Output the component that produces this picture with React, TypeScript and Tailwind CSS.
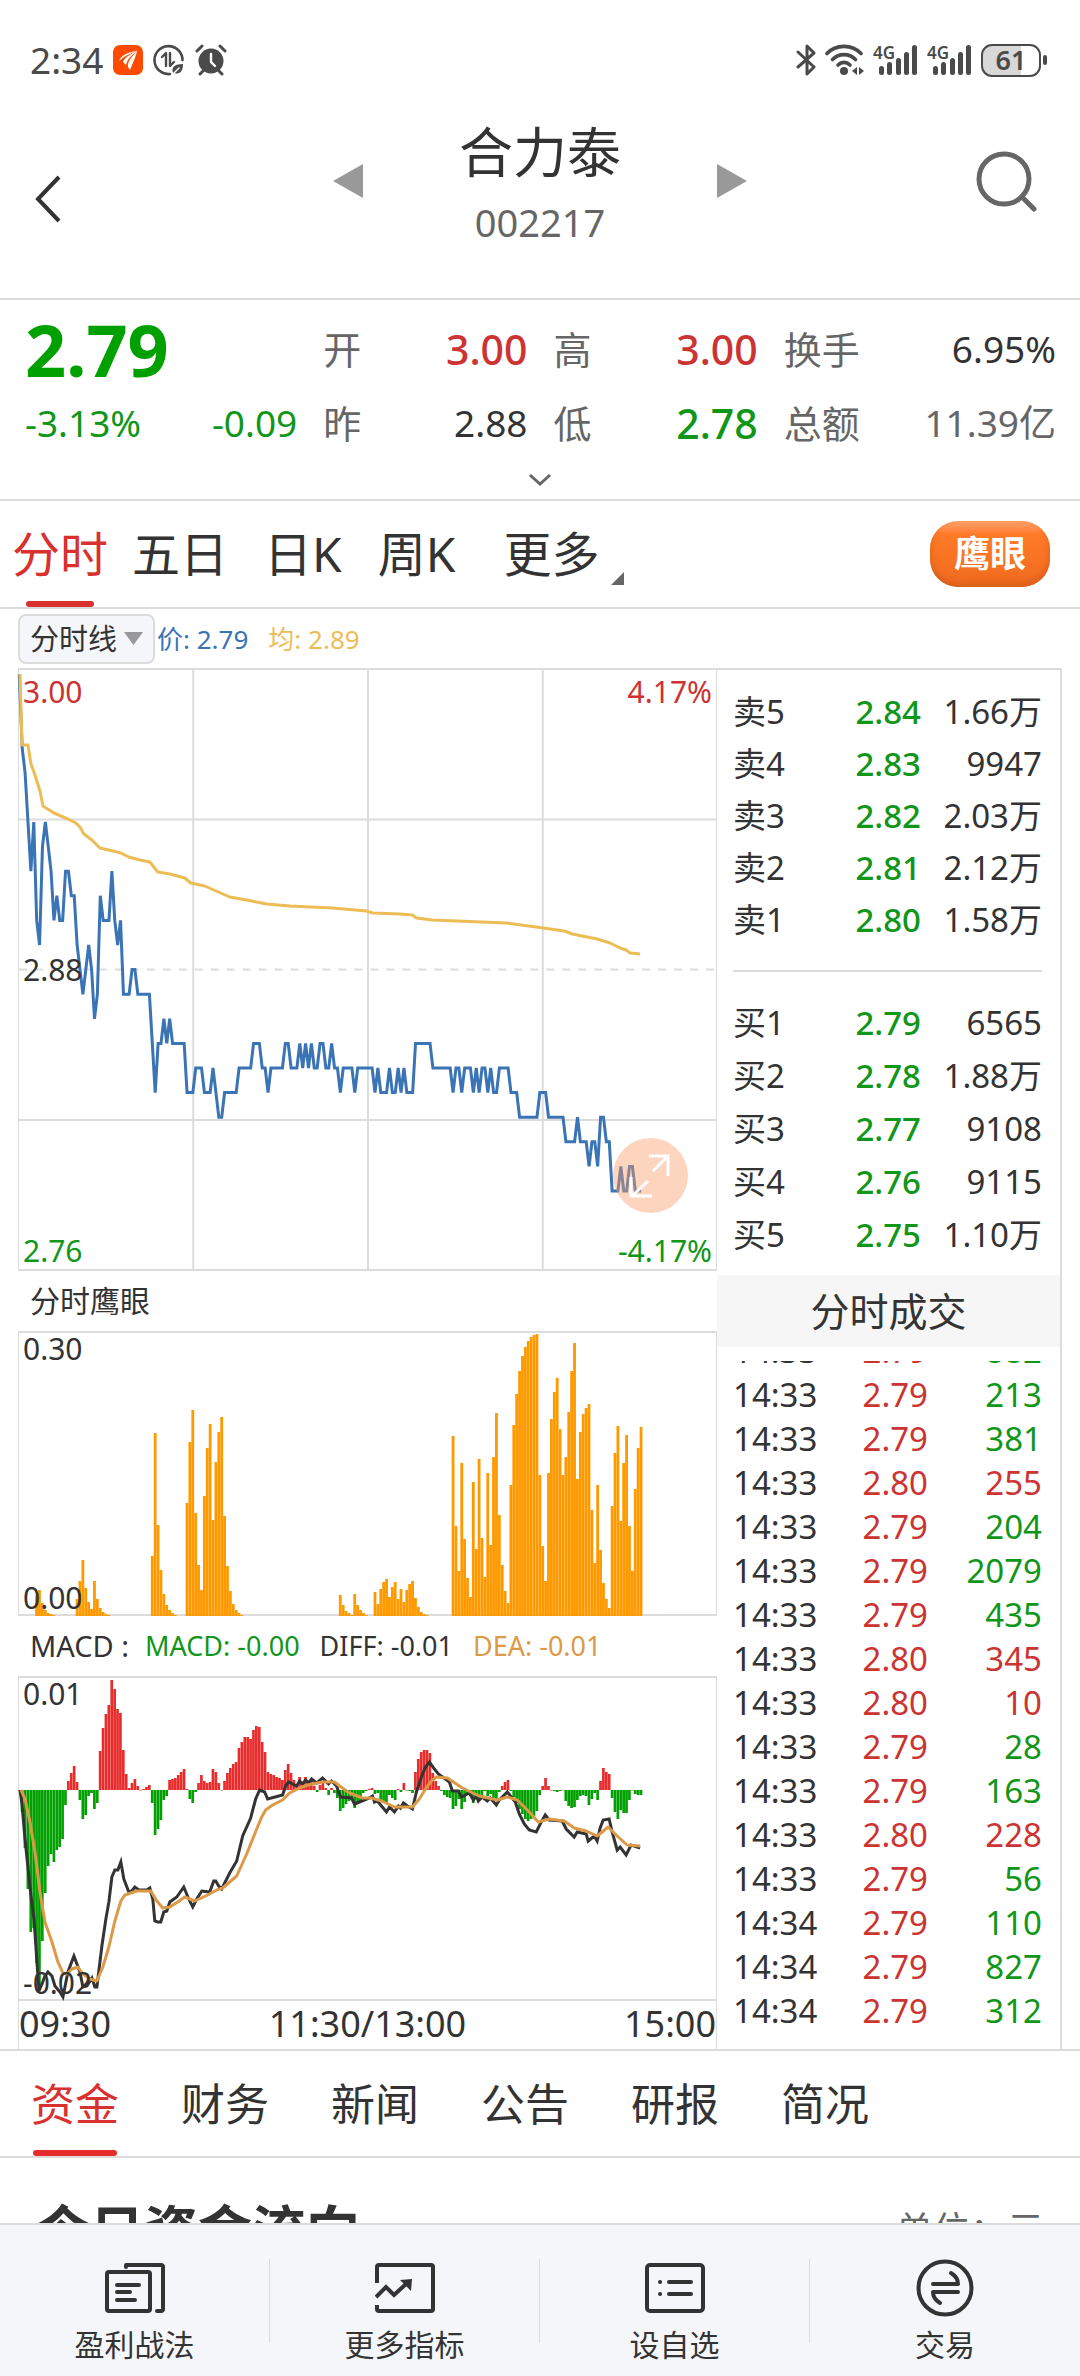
import { useState } from "react";

const SLOTS = 241;
const CHART_W = 698;
const STEP = CHART_W / SLOTS;

// [price in fen, number of minutes it stays there]
const PRICE_RUNS = [
  [300, 1], [297, 1], [296, 1], [294, 1], [292, 1], [294, 1], [290, 1], [289, 1], [293, 1], [294, 1],
  [293, 1], [292, 1], [290, 1], [291, 1], [290, 2], [292, 2], [291, 2], [289, 1], [288, 1], [287, 1],
  [288, 1], [289, 1], [288, 1], [286, 1], [287, 1], [291, 1], [290, 3], [292, 1], [290, 1], [289, 1],
  [290, 1], [287, 3], [288, 2], [287, 5], [285, 1], [283, 1], [285, 2], [286, 1], [285, 1], [286, 1],
  [285, 5], [283, 3], [284, 3], [283, 3], [284, 1], [283, 1], [282, 2], [283, 5], [284, 5], [285, 3],
  [284, 2], [283, 1], [284, 5], [285, 2], [284, 3], [285, 1], [284, 1], [285, 1], [284, 1], [285, 1],
  [284, 2], [285, 2], [284, 2], [285, 1], [284, 2], [283, 1], [284, 4], [283, 1], [284, 6], [283, 1],
  [284, 1], [283, 3], [284, 1], [283, 2], [284, 1], [283, 1], [284, 1], [283, 3], [285, 6], [284, 7],
  [283, 1], [284, 2], [283, 1], [284, 3], [283, 1], [284, 1], [283, 1], [284, 2], [283, 1], [284, 1],
  [283, 2], [284, 4], [283, 3], [282, 7], [283, 3], [282, 6], [281, 4], [282, 1], [281, 3], [280, 1],
  [281, 2], [280, 1], [282, 2], [281, 2], [279, 3], [280, 1], [279, 2], [280, 2], [279, 3],
];

const AVERAGE_LINE =
  "1,5 3,76 9,76 12,95 15,103 21,122 24,137 35,144 49,150 57,154 61,158 65,165 73,171 81,179 90,181 102,184 110,188 121,191 131,193 139,203 151,205 166,209 172,214 186,217 211,228 228,231 248,235 271,237 314,239 348,242 354,244 381,245 394,246 398,249 414,251 488,254 518,258 546,262 554,265 579,270 592,274 602,279 608,281 612,284 622,285";

// groups of bars: first minute, then one height per minute
const EAGLE_GROUPS: [number, number[]][] = [
  [6, [20, 26, 13, 6, 3, 2, 1]],
  [20, [17, 35, 56, 28, 14, 7, 35, 17, 8, 4, 2, 1]],
  [46, [60, 183, 91, 46, 22, 11, 6, 3, 1]],
  [58, [113, 174, 206, 103, 51, 26, 120, 168, 192, 96, 154, 184, 199, 100, 50, 25, 12, 6, 3, 1]],
  [111, [21, 11, 5, 3, 1, 22, 11, 6, 3, 1]],
  [123, [24, 12, 27, 34, 37, 19, 29, 34, 17, 27, 14, 26, 32, 35, 18, 9, 4, 2, 1]],
  [150, [180, 90, 45, 153, 77, 38, 19, 134, 67, 157, 78, 39, 143, 71, 159, 203, 101, 51, 25, 13, 131, 191, 222, 245, 260, 269, 275, 279, 281, 282, 141, 70, 35, 143, 197, 224, 238, 187, 141, 159, 204, 245, 273, 137, 184, 202, 208, 212, 106, 53, 131, 66, 33, 17, 8, 110, 163, 190, 95, 153, 181, 90, 45, 127, 168, 189]],
];

const MACD_BARS = [
  0, -22, -58, -99, -142, -138, -173, -199, -151, -103, -76, -64, -72, -60, -57, -49, -15, 9, 17, 24,
  8, -10, -29, -25, -6, -3, -19, -13, 39, 62, 76, 85, 110, 101, 81, 77, 40, 16, 2, 7,
  11, 4, 0, 1, 3, 5, -13, -45, -39, -30, -10, -6, 10, 11, 12, 15, 18, 21, 1, -9,
  -13, -2, 7, 15, 9, 7, 8, 21, 18, 7, 0, 9, 17, 22, 26, 28, 42, 48, 53, 53,
  51, 60, 64, 63, 48, 38, 18, 16, 15, 13, 12, 10, 20, 26, 17, 10, 4, 13, 7, 13,
  9, 11, 4, -2, 5, 8, 2, -5, 2, -3, -8, -21, -18, -14, -11, -10, -18, -14, -12, -3,
  -1, 1, 2, -4, -3, -10, -13, -14, -5, -8, -10, 1, -2, 7, 0, -1, -3, 18, 31, 38,
  40, 40, 37, 17, 9, 4, -1, -5, -7, -8, -19, -16, -9, -19, -12, -5, -6, -13, -6, -9,
  -6, -1, -6, -4, -8, -9, -2, 4, 8, 10, -1, -7, -13, -19, -24, -29, -31, -29, -26, -21,
  -5, 4, 12, 4, 0, -1, -2, -1, 0, -11, -16, -18, -17, -10, -6, -5, -6, -15, -9, -3,
  -10, 9, 22, 18, 16, -8, -22, -29, -20, -23, -23, -10, 0, -4, -5, -5,
];

const DIFF_LINE =
  "1,113 3,127 6,162 12,219 15,242 20,314 23,307 26,299 29,295 33,299 36,309 41,315 44,320 49,295 55,279 61,295 64,310 68,309 73,301 76,310 78,310 83,269 87,242 90,225 93,200 96,193 99,193 102,185 105,202 110,215 113,214 116,210 120,213 128,213 131,211 134,222 136,244 139,245 142,245 145,235 148,234 151,225 158,220 165,210 170,222 174,230 178,222 183,214 191,215 195,204 197,204 200,209 203,212 211,196 218,184 224,159 232,141 237,122 241,113 246,115 249,122 264,118 267,109 270,105 278,109 281,104 284,107 287,103 290,106 293,102 298,106 304,101 310,107 313,104 318,109 322,120 333,121 336,127 341,125 351,121 354,119 356,125 359,124 363,129 368,135 371,130 376,135 380,129 382,131 385,126 389,129 394,132 398,115 403,100 407,90 411,85 416,92 420,97 431,105 434,114 440,114 443,120 451,116 455,123 458,119 460,124 464,120 469,124 472,121 478,128 481,123 489,115 497,125 501,137 506,147 511,153 518,155 523,145 527,138 531,143 544,144 548,152 556,160 559,155 568,157 570,164 576,159 579,164 582,151 585,143 591,142 594,155 599,173 602,170 608,178 613,168 622,171";

const DEA_LINE =
  "2,113 6,122 11,145 16,175 21,215 26,245 33,265 39,285 44,296 48,297 53,292 59,290 64,297 71,302 78,304 84,290 90,270 96,244 102,224 106,218 118,214 132,214 138,224 144,231 151,230 159,225 166,220 176,224 189,218 198,213 204,211 218,199 228,177 236,157 243,140 247,133 254,128 264,123 271,116 281,111 289,108 304,105 316,105 321,109 331,116 344,121 353,121 363,124 376,130 394,130 401,122 407,112 413,104 418,100 429,101 444,111 461,119 479,123 489,120 499,123 511,135 520,145 531,142 546,144 556,151 568,154 579,159 590,150 599,159 609,168 622,169";

const SELLS = [
  ["卖5", "2.84", "1.66万"],
  ["卖4", "2.83", "9947"],
  ["卖3", "2.82", "2.03万"],
  ["卖2", "2.81", "2.12万"],
  ["卖1", "2.80", "1.58万"],
];

const BUYS = [
  ["买1", "2.79", "6565"],
  ["买2", "2.78", "1.88万"],
  ["买3", "2.77", "9108"],
  ["买4", "2.76", "9115"],
  ["买5", "2.75", "1.10万"],
];

const TICKS: [string, string, number, boolean][] = [
  ["14:33", "2.79", 882, false],
  ["14:33", "2.79", 213, false],
  ["14:33", "2.79", 381, false],
  ["14:33", "2.80", 255, true],
  ["14:33", "2.79", 204, false],
  ["14:33", "2.79", 2079, false],
  ["14:33", "2.79", 435, false],
  ["14:33", "2.80", 345, true],
  ["14:33", "2.80", 10, true],
  ["14:33", "2.79", 28, false],
  ["14:33", "2.79", 163, false],
  ["14:33", "2.80", 228, true],
  ["14:33", "2.79", 56, false],
  ["14:34", "2.79", 110, false],
  ["14:34", "2.79", 827, false],
  ["14:34", "2.79", 312, false],
];

const PERIODS = [
  { name: "分时", space: "" },
  { name: "五日", space: "ml-6" },
  { name: "日K", space: "ml-9" },
  { name: "周K", space: "ml-9" },
  { name: "更多", space: "ml-12" },
];

const SECTIONS = ["资金", "财务", "新闻", "公告", "研报", "简况"];

function slotX(i: number) {
  return (i + 0.1) * STEP;
}

function pricePoints() {
  const points: string[] = [];
  let i = 0;
  PRICE_RUNS.forEach(([price, count]) => {
    for (let n = 0; n < count; n++) {
      points.push(`${slotX(i).toFixed(1)},${(300.6 - (price - 288) * 24.6).toFixed(1)}`);
      i++;
    }
  });
  return points.join(" ");
}

function Signal() {
  return (
    <svg className="overflow-visible" width="46" height="32" viewBox="0 0 46 32" fill="#4a4a4a">
      <text x="0" y="15" fontSize="17" fontWeight="600">4G</text>
      <rect x="6" y="22" width="5" height="9" rx="2.5" />
      <rect x="14" y="18" width="5" height="13" rx="2.5" />
      <rect x="23" y="14" width="5" height="17" rx="2.5" />
      <rect x="31" y="8" width="5" height="23" rx="2.5" />
      <rect x="39" y="1" width="5" height="30" rx="2.5" />
    </svg>
  );
}

function StatusBar() {
  return (
    <div className="flex items-center justify-between h-[100px] pt-5 pl-[30px] pr-[33px] text-[#4a4a4a]">
      <div className="flex items-center gap-[10px]">
        <span className="text-[37px] leading-[40px]">2:34</span>
        <svg width="30" height="30" viewBox="0 0 30 30">
          <rect width="30" height="30" rx="7" fill="#ff4a00" />
          <path d="M6 16C8 10 14 8 24 5.500C18 9 12 10 6 16z" fill="#fff" />
          <path d="M10 17C12 12 17 10 24 5.500C20 10 15 12 13 20z" fill="#fff" />
          <path d="M15 22C14 16 20 11 24 5.500C23 12 20 17 17 25z" fill="#fff" />
        </svg>
        <svg width="32" height="32" viewBox="0 0 32 32" fill="none" stroke="#4a4a4a" strokeWidth="2.6" strokeLinecap="round" strokeLinejoin="round">
          <path d="M17 30A14 14 0 1 1 29.500 16" />
          <path d="M9 13l4-4v13M17 9v13l4-4" strokeWidth="2.4" />
          <path d="M20 29c-2-6 2-9 10-9 0 7-3 11-9 9z" fill="#4a4a4a" stroke="none" />
          <path d="M19 31l7-7" stroke="#fff" strokeWidth="1.500" />
        </svg>
        <svg width="32" height="32" viewBox="0 0 32 32" fill="none" stroke="#4a4a4a" strokeWidth="3" strokeLinecap="round">
          <circle cx="16" cy="17" r="12.500" fill="#4a4a4a" stroke="none" />
          <path d="M2 7l5-5M30 7l-5-5M5 30l4-4M27 30l-4-4" />
          <path d="M16 10v8l4 4" stroke="#fff" strokeWidth="2.4" />
        </svg>
      </div>
      <div className="flex items-center gap-2">
        <svg width="21" height="32" viewBox="0 0 21 32" fill="none" stroke="#4a4a4a" strokeWidth="3" strokeLinecap="round" strokeLinejoin="round">
          <path d="M2 8l16 15-7 7V2l7 7L2 23" />
        </svg>
        <svg width="40" height="32" viewBox="0 0 40 32" fill="none" stroke="#4a4a4a" strokeWidth="3.600" strokeLinecap="round">
          <path d="M2 9.500C11 0 27 0 36 9.500" />
          <path d="M7.500 15.500C14 9 24 9 30.500 15.500" />
          <path d="M13 21C16.500 17.500 21.500 17.500 25 21" />
          <circle cx="19" cy="27" r="4" fill="#4a4a4a" stroke="none" />
          <path d="M32 23v8l-5-4zM34 23v8l5-4z" fill="#4a4a4a" stroke="none" />
        </svg>
        <Signal />
        <Signal />
        <div className="flex items-center gap-[2px]">
          <div className="flex items-center justify-center w-[60px] h-[33px] rounded-[11px] border-2 border-[#4a4a4a] bg-linear-to-r from-[#d8d8d8] from-68% to-white to-68%">
            <span className="text-[27px] leading-[28px] font-semibold">61</span>
          </div>
          <span className="w-1 h-[10px] rounded-full bg-[#4a4a4a]" />
        </div>
      </div>
    </div>
  );
}

function Header() {
  return (
    <header className="flex items-center justify-between h-[200px] px-8 pb-6 border-b-2 border-[#dcdcdc]">
      <button aria-label="返回" className="flex w-20 pt-6">
        <svg width="32" height="48" viewBox="0 0 32 48" fill="none" stroke="#333" strokeWidth="4">
          <path d="M27 2L6 24l21 22" />
        </svg>
      </button>
      <div className="flex items-center justify-between w-[414px]">
        <button aria-label="上一只" className="pb-3">
          <svg width="30" height="34" viewBox="0 0 30 34" fill="#999">
            <path d="M30 0v34L0 17z" />
          </svg>
        </button>
        <div className="text-center">
          <h1 className="text-[54px] leading-[70px] text-[#333]">合力泰</h1>
          <p className="text-[38px] leading-[70px] text-[#666]">002217</p>
        </div>
        <button aria-label="下一只" className="pb-3">
          <svg width="30" height="34" viewBox="0 0 30 34" fill="#999">
            <path d="M0 0v34l30-17z" />
          </svg>
        </button>
      </div>
      <button aria-label="搜索" className="flex justify-end w-20 pr-[10px] pb-3">
        <svg width="62" height="62" viewBox="0 0 62 62" fill="none" stroke="#666" strokeWidth="5" strokeLinecap="round">
          <circle cx="28" cy="29" r="25" />
          <path d="M46 47l12 12" />
        </svg>
      </button>
    </header>
  );
}

function Quote({ label, value, valueClass }: { label: string; value: string; valueClass: string }) {
  return (
    <div className="flex items-center justify-between h-[74px]">
      <span className="text-[38px] leading-[48px] text-[#666]">{label}</span>
      <span className={valueClass}>{value}</span>
    </div>
  );
}

function QuotePanel() {
  return (
    <section className="border-b-2 border-[#dcdcdc] pt-3">
      <div className="grid grid-cols-[4fr_3fr_3fr_4fr] gap-x-[26px] pl-[25px] pr-6">
        <div className="flex items-center h-[74px] text-[72px] leading-[74px] font-bold text-[#00a000]">2.79</div>
        <Quote label="开" value="3.00" valueClass="text-[41px] leading-[48px] font-medium text-[#cc3333]" />
        <Quote label="高" value="3.00" valueClass="text-[41px] leading-[48px] font-medium text-[#cc3333]" />
        <Quote label="换手" value="6.95%" valueClass="text-[37px] leading-[48px] text-[#333]" />
        <div className="flex items-center justify-between h-[74px] text-[37px] leading-[48px] text-[#109618]">
          <span>-3.13%</span>
          <span>-0.09</span>
        </div>
        <Quote label="昨" value="2.88" valueClass="text-[37px] leading-[48px] text-[#333]" />
        <Quote label="低" value="2.78" valueClass="text-[41px] leading-[48px] font-medium text-[#109618]" />
        <Quote label="总额" value="11.39亿" valueClass="text-[37px] leading-[48px] text-[#666]" />
      </div>
      <button aria-label="展开" className="flex justify-center items-center w-full h-[39px]">
        <svg width="24" height="14" viewBox="0 0 24 14" fill="none" stroke="#666" strokeWidth="3">
          <path d="M2 2l10 9 10-9" />
        </svg>
      </button>
    </section>
  );
}

function PeriodTabs() {
  const [active, setActive] = useState("分时");
  return (
    <nav className="flex items-center justify-between h-[108px] pl-3 pr-[30px] border-b-2 border-[#dcdcdc]">
      <div className="flex h-full">
        {PERIODS.map(({ name, space }) => (
          <button
            key={name}
            onClick={() => setActive(name)}
            className={`relative h-full text-[48px] leading-[60px] ${space} ${active === name ? "text-[#d93030]" : "text-[#333]"}`}
          >
            {name}
            {active === name && <span className="absolute bottom-0 inset-x-[14px] h-[6px] rounded-full bg-[#d93030]" />}
          </button>
        ))}
        <svg className="self-end mb-[22px] ml-3" width="13" height="13" viewBox="0 0 13 13" fill="#666">
          <path d="M13 0v13H0z" />
        </svg>
      </div>
      <button className="w-[120px] h-[66px] rounded-[28px] bg-linear-to-b from-[#ffa36a] via-[#ff7a28] via-20% to-[#f06a1e] text-[36px] leading-[60px] font-bold text-white shadow-[inset_0_-4px_6px_#d8601c]">
        鹰眼
      </button>
    </nav>
  );
}

function PriceChart() {
  return (
    <div className="relative border-y-2 border-x border-[#dcdcdc] text-[30px] leading-[36px]">
      <svg className="block w-full h-[599px] overflow-visible" viewBox="0 1 698 599" preserveAspectRatio="none" fill="none">
        <path d="M0 150.500H698M0 451H698M174.500 0V601M349.500 0V601M524.500 0V601" stroke="#dcdcdc" strokeWidth="2" />
        <path d="M0 300.500H698" stroke="#dcdcdc" strokeWidth="2" strokeDasharray="8 8" />
        <polyline points={pricePoints()} stroke="#3a74b5" strokeWidth="3" />
        <polyline points={AVERAGE_LINE} stroke="#ecbc55" strokeWidth="3" strokeLinejoin="round" />
      </svg>
      <span className="absolute left-1 top-1 text-[#cc3333]">3.00</span>
      <span className="absolute right-1 top-1 text-[#cc3333]">4.17%</span>
      <span className="absolute left-1 top-1/2 -translate-y-1/2 text-[#333]">2.88</span>
      <span className="absolute left-1 bottom-0 text-[#109618]">2.76</span>
      <span className="absolute right-1 bottom-0 text-[#109618]">-4.17%</span>
      <button aria-label="全屏" className="absolute right-7 bottom-14 w-[75px] h-[75px] rounded-full bg-[#fa9c63]/42">
        <svg width="75" height="75" viewBox="0 0 75 75" fill="none" stroke="#fff" strokeWidth="3">
          <path d="M36 18h19v20M55 18L40 33M35 43L19 58M18 39v19h21" />
        </svg>
      </button>
    </div>
  );
}

function EagleChart() {
  return (
    <div className="relative border-y-2 border-x border-[#dcdcdc] text-[30px] leading-[32px] text-[#333]">
      <svg className="block w-full h-[281px] overflow-visible" viewBox="0 0 698 281" preserveAspectRatio="none" fill="#ff9900">
        {EAGLE_GROUPS.map(([start, heights]) =>
          heights.map((h, n) => (
            <rect key={start + n} x={slotX(start + n) - STEP / 2} y={283 - h} width="2.8" height={h} />
          ))
        )}
      </svg>
      <span className="absolute left-1 top-0">0.30</span>
      <span className="absolute left-1 bottom-0">0.00</span>
    </div>
  );
}

function MacdChart() {
  return (
    <div className="relative border-y-2 border-x border-[#dcdcdc] text-[30px] leading-[32px] text-[#333]">
      <svg className="block w-full h-[321px] overflow-visible" viewBox="0 1 698 321" preserveAspectRatio="none" fill="none">
        {MACD_BARS.map((v, i) => (
          <rect
            key={i}
            x={slotX(i) - STEP / 2}
            y={v > 0 ? 113 - v : 113}
            width="2.700"
            height={Math.max(Math.abs(v), 0.5)}
            fill={v >= 0 ? "#e82c2c" : "#00a000"}
          />
        ))}
        <polyline points={DIFF_LINE} stroke="#333" strokeWidth="3" />
        <polyline points={DEA_LINE} stroke="#dc9a48" strokeWidth="3" strokeLinejoin="round" />
      </svg>
      <span className="absolute left-1 top-0">0.01</span>
      <span className="absolute left-1 bottom-0">-0.02</span>
    </div>
  );
}

function Charts() {
  return (
    <div className="flex-1 min-w-0">
      <PriceChart />
      <h2 className="h-[60px] pl-3 text-[30px] leading-[60px] text-[#333]">分时鹰眼</h2>
      <EagleChart />
      <div className="flex items-center h-[60px] pl-3 text-[27px] leading-[60px] whitespace-nowrap">
        <span className="text-[29px] text-[#333]">MACD :</span>
        <span className="ml-4 text-[#109618]">MACD: -0.00</span>
        <span className="ml-5 text-[#333]">DIFF: -0.01</span>
        <span className="ml-5 text-[#dc9a48]">DEA: -0.01</span>
      </div>
      <MacdChart />
      <div className="flex justify-between h-12 border-x border-[#dcdcdc] text-[36px] leading-[46px] text-[#333]">
        <span>09:30</span>
        <span>11:30/13:00</span>
        <span>15:00</span>
      </div>
    </div>
  );
}

function Orders({ rows, rowClass }: { rows: string[][]; rowClass: string }) {
  return (
    <table className="w-full">
      <tbody>
        {rows.map(([name, price, volume]) => (
          <tr key={name} className={rowClass}>
            <td className="w-20 p-0">{name}</td>
            <td className="p-0 text-right font-medium text-[#109618]">{price}</td>
            <td className="w-[121px] p-0 text-right">{volume}</td>
          </tr>
        ))}
      </tbody>
    </table>
  );
}

function SidePanel() {
  return (
    <aside className="w-[345px] shrink-0 border-t-2 border-r-2 border-[#dcdcdc] text-[33px] leading-[40px] text-[#333]">
      <div className="pt-4 pb-[14px] pl-4 pr-[18px]">
        <Orders rows={SELLS} rowClass="h-[52px]" />
        <hr className="my-6 border-t-2 border-[#dcdcdc]" />
        <Orders rows={BUYS} rowClass="h-[53px]" />
      </div>
      <h2 className="h-[72px] bg-[#f6f6f6] text-center text-[39px] leading-[72px]">分时成交</h2>
      <div className="mt-[14px] pl-4 pr-[18px] overflow-hidden">
        <table className="w-full -mt-8">
          <tbody>
            {TICKS.map(([time, price, volume, up], i) => (
              <tr key={i} className="h-11">
                <td className="w-[90px] p-0">{time}</td>
                <td className="p-0 text-right text-[#cc3333]">{price}</td>
                <td className={`w-[114px] p-0 text-right ${up ? "text-[#cc3333]" : "text-[#109618]"}`}>{volume}</td>
              </tr>
            ))}
          </tbody>
        </table>
      </div>
    </aside>
  );
}

function SectionTabs() {
  const [active, setActive] = useState("资金");
  return (
    <nav className="flex gap-[62px] h-[109px] pl-[31px] border-y-2 border-[#dcdcdc]">
      {SECTIONS.map((name) => (
        <button
          key={name}
          onClick={() => setActive(name)}
          className={`relative h-full text-[44px] leading-[60px] ${active === name ? "text-[#d93030]" : "text-[#333]"}`}
        >
          {name}
          {active === name && <span className="absolute bottom-0 inset-x-[2px] h-[6px] rounded-full bg-[#e52b2b]" />}
        </button>
      ))}
    </nav>
  );
}

function BottomBar() {
  const items = [
    {
      name: "盈利战法",
      icon: (
        <svg width="60" height="50" viewBox="0 0 60 50" fill="none" stroke="#333" strokeWidth="4" strokeLinecap="round" strokeLinejoin="round">
          <path d="M21 4V2h35q2 0 2 2v42q0 2-2 2h-4" />
          <rect x="2" y="9" width="43" height="39" rx="2" />
          <path d="M12 22h22M12 29h13M12 37h18" />
        </svg>
      ),
    },
    {
      name: "更多指标",
      icon: (
        <svg width="60" height="50" viewBox="0 0 60 50" fill="none" stroke="#333" strokeWidth="4">
          <path d="M2 20V4q0-2 2-2h52q2 0 2 2v42q0 2-2 2H4q-2 0-2-2v-4" />
          <path d="M1 34l10-10 8 8 12-11" />
          <path d="M25 17l12-1-1 12z" fill="#333" stroke="none" />
        </svg>
      ),
    },
    {
      name: "设自选",
      icon: (
        <svg width="60" height="50" viewBox="0 0 60 50" fill="none" stroke="#333" strokeWidth="4" strokeLinecap="round">
          <rect x="2" y="2" width="56" height="46" rx="3" />
          <path d="M15 19h.1M15 31h.1M24 19h22M24 31h22" />
        </svg>
      ),
    },
    {
      name: "交易",
      icon: (
        <svg width="58" height="58" viewBox="0 0 58 58" fill="none" stroke="#333" strokeWidth="4" strokeLinecap="round" strokeLinejoin="round">
          <circle cx="29" cy="29" r="26.500" />
          <path d="M17 25h25c0-5-2-8-7-11M42 33H17c0 5 2 8 7 11" />
        </svg>
      ),
    },
  ];
  return (
    <nav className="fixed bottom-0 inset-x-0 flex h-[153px] border-t-2 border-[#dcdcdc] bg-[#f5f6f9]">
      {items.map(({ name, icon }, i) => (
        <div key={name} className="flex flex-1 pt-[34px]">
          <a href="#" className="flex flex-1 flex-col items-center text-[30px] leading-[36px] text-[#333]">
            <span className="flex items-center h-[58px]">{icon}</span>
            <span className="mt-[10px]">{name}</span>
          </a>
          {i < items.length - 1 && <span className="w-px h-[84px] bg-[#dcdcdc]" />}
        </div>
      ))}
    </nav>
  );
}

export default function App() {
  return (
    <div className="min-h-screen overflow-hidden bg-white font-['Noto_Sans','Noto_Sans_CJK_SC',sans-serif]">
      <StatusBar />
      <Header />
      <QuotePanel />
      <PeriodTabs />
      <div className="flex items-center h-[59px] pl-[18px] text-[26px] leading-[36px]">
        <label className="relative mr-[2px]">
          <select
            aria-label="图表类型"
            className="block appearance-none w-[137px] h-[50px] pl-[10px] rounded-lg border-2 border-[#dcdcdc] bg-[#f5f6fa] text-[29px] leading-[40px] text-[#333]"
          >
            <option>分时线</option>
          </select>
          <svg className="absolute right-3 top-[18px] pointer-events-none" width="19" height="13" viewBox="0 0 19 13" fill="#999">
            <path d="M0 0h19L9.500 13z" />
          </svg>
        </label>
        <span className="text-[#3a74b5]">价: 2.79</span>
        <span className="ml-5 text-[#ecbc55]">均: 2.89</span>
      </div>
      <main className="flex pl-[18px] pr-[18px]">
        <Charts />
        <SidePanel />
      </main>
      <SectionTabs />
      <section className="flex items-center justify-between h-[144px] pl-9 pr-9">
        <h2 className="text-[54px] leading-[64px] font-bold text-[#333]">今日资金流向</h2>
        <span className="text-[37px] leading-[64px] text-[#666]">单位：元</span>
      </section>
      <BottomBar />
    </div>
  );
}
